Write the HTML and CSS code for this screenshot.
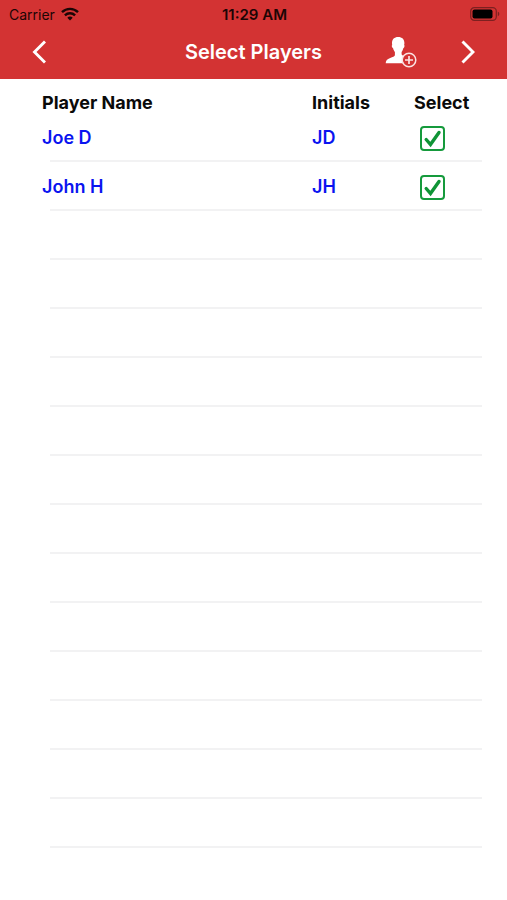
FILE: index.html
```html
<!DOCTYPE html>
<html lang="en">
<head>
<meta charset="utf-8">
<meta name="viewport" content="width=device-width, initial-scale=1">
<title>Select Players</title>
<link rel="stylesheet" href="styles.css">
</head>
<body>
<header class="header">
  <div class="status">
    <div class="carrier">
      <span>Carrier</span>
      <svg width="18" height="14" viewBox="0 0 18 14" fill="none" stroke="currentColor" stroke-width="2.4" aria-hidden="true">
        <path d="M1 5.200C5.600.7 12.400.7 17 5.200"/>
        <path d="M3.900 8.300c2.900-2.800 7.300-2.800 10.200 0"/>
        <path d="M6.300 10.700c1.500-1.500 3.900-1.500 5.400 0L9 13.500z" fill="currentColor" stroke="none"/>
      </svg>
    </div>
    <time class="clock">11:29 AM</time>
    <svg class="battery" width="30" height="14" viewBox="0 0 30 14" aria-hidden="true">
      <rect x=".7" y=".7" width="25.600" height="12.600" rx="3.600" fill="none" stroke="#7d2020" stroke-width="1.200"/>
      <rect x="2.500" y="2.500" width="20" height="9" rx="2" fill="#000"/>
      <path d="M27.800 4.800c2 .6 2 3.800 0 4.400z" fill="#7d2020"/>
    </svg>
  </div>
  <nav class="nav">
    <button class="icon-button" type="button" aria-label="Back">
      <svg width="14" height="24" viewBox="0 0 14 24" fill="none" stroke="currentColor" stroke-width="2.900"><path d="M13 1.500 2.500 12 13 22.500"/></svg>
    </button>
    <h1 class="title">Select Players</h1>
    <div class="actions">
      <button class="icon-button" type="button" aria-label="Add player">
        <svg width="32" height="32" viewBox="0 0 32 32" fill="none">
          <path d="M13.200 1C9.300 1 7 3.300 7 7c0 .8.100 1.400.2 2-.6.3-.5 1.600.1 2.500.3.500.6.600.8.800.4 1.700 1 2.700 1.800 3.600v3.300c-.3 1.200-2.100 1.700-4.700 2.700C2 23.200.8 24.300.7 27.300H18.500a8 8 0 0 1 .3-7.500c-1.200-.4-2-.8-2.200-1.600v-2.300c.8-.9 1.400-2 1.700-3.600.4-.2.700-.5.900-1 .4-.9.500-2-.1-2.300.2-.7.300-1.300.3-2C19.400 3.300 17.100 1 13.200 1Z" fill="currentColor"/>
          <circle cx="24" cy="24" r="6.800" stroke="#fbe3e3" stroke-width="1.500"/>
          <path d="M24 20v8M20 24h8" stroke="#fbe3e3" stroke-width="1.700"/>
        </svg>
      </button>
      <button class="icon-button" type="button" aria-label="Next">
        <svg width="14" height="24" viewBox="0 0 14 24" fill="none" stroke="currentColor" stroke-width="2.900"><path d="M1.500 1.500 12 12 1.500 22.500"/></svg>
      </button>
    </div>
  </nav>
</header>
<main class="content">
  <table class="players">
    <colgroup><col><col class="col-initials"><col class="col-select"></colgroup>
    <thead>
      <tr><th scope="col" class="name">Player Name</th><th scope="col">Initials</th><th scope="col">Select</th></tr>
    </thead>
    <tbody>
      <tr>
        <td class="name"><label for="joe">Joe D</label></td><td>JD</td>
        <td><span class="check"><input id="joe" type="checkbox" checked><svg viewBox="0 0 25 25" aria-hidden="true"><path d="m6.200 13.500 4.300 5L19 6.500"/></svg></span></td>
      </tr>
      <tr>
        <td class="name"><label for="john">John H</label></td><td>JH</td>
        <td><span class="check"><input id="john" type="checkbox" checked><svg viewBox="0 0 25 25" aria-hidden="true"><path d="m6.200 13.500 4.300 5L19 6.500"/></svg></span></td>
      </tr>
      <tr><td colspan="3"></td></tr>
      <tr><td colspan="3"></td></tr>
      <tr><td colspan="3"></td></tr>
      <tr><td colspan="3"></td></tr>
      <tr><td colspan="3"></td></tr>
      <tr><td colspan="3"></td></tr>
      <tr><td colspan="3"></td></tr>
      <tr><td colspan="3"></td></tr>
      <tr><td colspan="3"></td></tr>
      <tr><td colspan="3"></td></tr>
      <tr><td colspan="3"></td></tr>
      <tr><td colspan="3"></td></tr>
      <tr><td colspan="3"></td></tr>
    </tbody>
  </table>
</main>
</body>
</html>
```
FILE: styles.css
```css
* {
  box-sizing: border-box;
}

body {
  margin: 0;
  background: #fff;
  color: #0a0a0a;
  font-family: Inter, "Liberation Sans", sans-serif;
}

svg {
  display: block;
}

.header {
  padding-bottom: 3px;
  background: #d33333;
}

.status,
.nav {
  display: grid;
  grid-template-columns: 1fr auto 1fr;
  align-items: center;
}

.status {
  height: 28px;
  padding: 0 7px 0 9px;
  color: #1c0505;
  font-size: 14px;
}

.carrier {
  display: flex;
  align-items: center;
  gap: 6px;
}

.clock {
  font-size: 15px;
  font-weight: 600;
}

.battery {
  justify-self: end;
}

.nav {
  height: 48px;
  padding: 0 32px;
  color: #fff;
}

.title {
  margin: 0;
  font-size: 20px;
  font-weight: 600;
}

.actions {
  display: flex;
  align-items: center;
  justify-content: flex-end;
  gap: 44px;
}

.icon-button {
  justify-self: start;
  padding: 0;
  border: 0;
  background: none;
  color: inherit;
  cursor: pointer;
}

.content {
  padding: 0 25px 0 50px;
}

.players {
  width: 100%;
  border-collapse: separate;
  border-spacing: 0;
  table-layout: fixed;
  font-size: 18px;
  font-weight: 600;
  line-height: 20px;
}

.col-initials {
  width: 102px;
}

.col-select {
  width: 68px;
}

.players th {
  height: 34px;
  padding: 14px 0 0;
  font-weight: 700;
  text-align: left;
  vertical-align: top;
}

.players td {
  height: 49px;
  padding: 3px 0 0;
  border-bottom: 2px solid #f2f2f3;
  color: #0a14f0;
}

/* Names start a little to the left of the row dividers. */
.players .name {
  text-indent: -8px;
}

.check {
  display: grid;
  width: 25px;
  height: 25px;
  margin-left: 6px;
}

.check input,
.check svg {
  grid-area: 1 / 1;
  width: 25px;
  height: 25px;
  margin: 0;
}

.check input {
  appearance: none;
  border: 2px solid #159a3c;
  border-radius: 4px;
}

.check svg {
  fill: none;
  stroke: #0f9436;
  stroke-width: 3.4;
  stroke-linecap: round;
  pointer-events: none;
}

.check input:not(:checked) + svg {
  visibility: hidden;
}
```
